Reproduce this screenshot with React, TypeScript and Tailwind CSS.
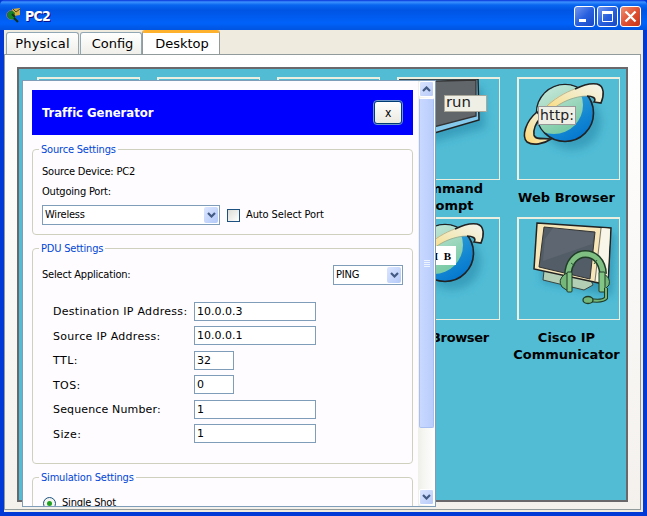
import type { ReactNode } from "react";

function Tile({ children, label, labelClass = "" }: { children?: ReactNode; label?: ReactNode; labelClass?: string }) {
  return (
    <div className="h-[140px] w-[103px]">
      <div className="h-[103px] w-[103px] border-t-2 border-r border-b border-l-2 border-[#ecefe0]">{children}</div>
      <div className={`-ml-2 flex h-[34px] w-[115px] items-center justify-center text-center text-[13px] leading-[17px] font-bold whitespace-nowrap text-black ${labelClass}`}>
        {label}
      </div>
    </div>
  );
}

function Globe({ tag, serif }: { tag: string; serif?: boolean }) {
  return (
    <svg width="100" height="100" viewBox="0 0 100 100">
      <defs>
        <linearGradient id="sea" x1="0" y1="0" x2="0.6" y2="1">
          <stop offset="0" stopColor="#48b9dc" />
          <stop offset="1" stopColor="#0579cf" />
        </linearGradient>
        <linearGradient id="land" x1="0" y1="0" x2="0.5" y2="1">
          <stop offset="0" stopColor="#e6f3ee" />
          <stop offset="1" stopColor="#7ccba7" />
        </linearGradient>
        <linearGradient id="ring" x1="0" y1="1" x2="1" y2="0">
          <stop offset="0" stopColor="#ffd66b" />
          <stop offset="0.5" stopColor="#f3e8b8" />
          <stop offset="1" stopColor="#f5f5ee" />
        </linearGradient>
        <filter id="soft" x="-30%" y="-30%" width="160%" height="160%">
          <feGaussianBlur stdDeviation="4" />
        </filter>
        <clipPath id="ball">
          <circle cx="46" cy="34" r="28" />
        </clipPath>
      </defs>
      <ellipse cx="53" cy="43" rx="29" ry="28" fill="#258aab" opacity="0.6" filter="url(#soft)" />
      <circle cx="46" cy="34" r="28.500" fill="url(#sea)" stroke="#222" strokeWidth="1.6" />
      <circle cx="35" cy="26" r="29" fill="url(#land)" clipPath="url(#ball)" />
      <path d="M18 33C7 42 2 57 8 63C14 67 25 65 32 60C24 59 16 61 15 56C14 50 17 44 22 38Z" fill="url(#ring)" stroke="#222" strokeWidth="1.6" />
      <path d="M24 31C34 18 50 12 58 9C64 6 72 4 78 5C86 7 85 17 82 24L75 23C78 19 73 17 68 17C52 17 38 25 29 36Z" fill="url(#ring)" />
      <path d="M24 31C34 20 47 13 56 10" fill="none" stroke="#aaa27e" strokeWidth="0.7" />
      <path d="M56 10C64 6 72 4 78 5C86 7 85 17 82 24L75 23C78 19 73 17 68 17" fill="none" stroke="#222" strokeWidth="1.6" />
      <path d="M68 17C56 17 42 23 34 30" fill="none" stroke="#8b9c84" strokeWidth="0.7" />
      <rect x="19.500" y="27.500" width="37" height="18" fill={serif ? "#fff" : "#efefe6"} stroke={serif ? "#fff" : "#999"} />
      {serif ? (
        <text x="19" y="41" fontFamily="Liberation Serif, serif" fontSize="11" fontWeight="700" textLength="33">{tag}</text>
      ) : (
        <text x="21" y="41" fontFamily="DejaVu Sans, sans-serif" fontSize="14" textLength="34" fill="#222">{tag}</text>
      )}
    </svg>
  );
}

function RunIcon() {
  return (
    <svg width="100" height="100" viewBox="0 0 100 100">
      <path d="M20 10L83 8L87 49L30 64Z" fill="#258aab" opacity="0.6" filter="url(#soft)" />
      <path d="M-1 0L79 0L80 41L8 62Z" fill="#85c9ec" stroke="#222" strokeWidth="1.5" />
      <path d="M3 3L77 1L77 37L8 55Z" fill="#61666b" stroke="#333" strokeWidth="1.3" />
      <rect x="45.500" y="16.500" width="42" height="16" fill="#efefe6" stroke="#aaa89b" />
      <text x="47" y="28" fontFamily="DejaVu Sans, sans-serif" fontSize="13.500" textLength="25" lengthAdjust="spacingAndGlyphs" fill="#222">run</text>
    </svg>
  );
}

function CommunicatorIcon() {
  return (
    <svg width="100" height="100" viewBox="0 0 100 100">
      <path d="M25 10L96 15L93 77L23 63Z" fill="#2888a9" opacity="0.65" filter="url(#soft)" />
      <path d="M25 52L24 61L65 71L74 66L71 59Z" fill="#b2ceb5" stroke="#394540" />
      <path d="M18 4L92 9L89 66L15 50Z" fill="#f6e6b8" stroke="#222" strokeWidth="1.5" />
      <path d="M83 9L91 10L88 64L77 62Z" fill="#f8f6e9" />
      <path d="M82 9L76 62" stroke="#777" />
      <path d="M25 8L76 13L71 60L20 48Z" fill="#535d68" stroke="#333" />
      <path d="M34 9L75 14L73 25L24 42L26 20Z" fill="#6a727a" opacity="0.5" />
      <path d="M49 57C49 28 83 28 84 55" fill="none" stroke="#203d28" strokeWidth="8" />
      <path d="M49 57C49 28 83 28 84 55" fill="none" stroke="#80bf82" strokeWidth="5" />
      <path d="M52 44L56 47M78 41L75 45" fill="none" stroke="#275935" strokeWidth="1" />
      <path d="M46 55Q38 61 43 68L49 72V54Z" fill="#75b779" stroke="#203d28" />
      <rect x="48" y="53" width="5" height="20" rx="1" fill="#83c585" stroke="#203d28" />
      <path d="M85 55Q92 59 90 66L85 71Z" fill="#75b779" stroke="#203d28" />
      <rect x="80" y="53" width="6" height="20" rx="1" fill="#83c585" stroke="#203d28" />
      <path d="M87 69V79Q84 83 70 81" fill="none" stroke="#203d28" strokeWidth="4" />
      <path d="M87 69V79Q84 83 70 81" fill="none" stroke="#75b779" strokeWidth="2" />
      <ellipse cx="69" cy="81" rx="5" ry="3.500" fill="#75b779" stroke="#203d28" strokeWidth="1.3" />
    </svg>
  );
}

function Chevron({ up }: { up?: boolean }) {
  return (
    <svg width="9" height="6" viewBox="0 0 9 6" className={up ? "rotate-180" : ""}>
      <path d="M1 1L4.500 4.500L8 1" fill="none" stroke="#435a83" strokeWidth="2.2" />
    </svg>
  );
}

function Select({ value, className }: { value: string; className: string }) {
  return (
    <div className={`flex h-5 items-center justify-between border border-[#7f9db9] bg-white pr-px pl-[2px] ${className}`}>
      <span>{value}</span>
      <span className="flex h-4 w-[14px] items-center justify-center rounded-[2px] bg-gradient-to-br from-[#dce6ff] to-[#b3c9f8]">
        <Chevron />
      </span>
    </div>
  );
}

function Group({ title, className, children }: { title: string; className: string; children: ReactNode }) {
  return (
    <fieldset className={`w-[381px] shrink-0 rounded-[4px] border border-[#d0d0bf] px-[9px] ${className}`}>
      <legend className="-ml-[3px] h-[13px] px-[2px] leading-[13px] text-[#0046d5]">{title}</legend>
      {children}
    </fieldset>
  );
}

const fields = [
  { label: "Destination IP Address:", value: "10.0.0.3", size: "w-[122px]", track: "tracking-[0.3px]" },
  { label: "Source IP Address:", value: "10.0.0.1", size: "w-[122px]", track: "tracking-[0.3px]" },
  { label: "TTL:", value: "32", size: "w-[40px]", track: "tracking-[0.5px]" },
  { label: "TOS:", value: "0", size: "w-[40px]", track: "tracking-[0.4px]" },
  { label: "Sequence Number:", value: "1", size: "w-[122px]", track: "tracking-[0.15px]" },
  { label: "Size:", value: "1", size: "w-[122px]", track: "tracking-[0.4px]" },
];

function TrafficGenerator() {
  return (
    <div className="absolute top-[80px] left-[22px] flex h-[427px] w-[414px] overflow-hidden border border-[#7f9db9] bg-[#fefcff] font-['DejaVu_Sans_Condensed','DejaVu_Sans',sans-serif] text-[11px] tracking-[-0.2px] text-black [font-stretch:condensed]">
      <div className="flex w-[395px] shrink-0 flex-col pt-[9px] pl-[9px]">
        <div className="flex h-[45px] w-[381px] shrink-0 items-center justify-between bg-[#0000ff] pr-[11px] pl-[10px]">
          <span className="text-[13px] font-bold tracking-[-0.05px] text-white">Traffic Generator</span>
          <button className="h-[23px] w-[28px] rounded-[3px] border border-[#003c74] bg-gradient-to-b from-white to-[#ebe9df] text-[12px] leading-[18px] outline outline-[#6c96c9]">x</button>
        </div>
        <Group title="Source Settings" className="mt-2 h-[92px]">
          <div className="flex h-[26px] items-center pt-[7px]">Source Device: PC2</div>
          <div className="flex h-5 items-center pt-px">Outgoing Port:</div>
          <div className="mt-[3px] flex items-center">
            <Select value="Wireless" className="w-[178px]" />
            <span className="mr-[6px] ml-[7px] h-[13px] w-[13px] border border-[#1c5180] bg-gradient-to-br from-[#dcdcd7] to-white" />
            <span className="tracking-[-0.1px]">Auto Select Port</span>
          </div>
        </Group>
        <Group title="PDU Settings" className="mt-[7px] h-[222px]">
          <div className="flex items-center justify-between pt-[10px]">
            <span>Select Application:</span>
            <Select value="PING" className="w-[70px]" />
          </div>
          <div className="mt-[14px] pl-[11px] font-['DejaVu_Sans',sans-serif] tracking-normal [font-stretch:normal]">
            {fields.map((f) => (
              <div key={f.label} className="flex h-[24.5px] items-center">
                <span className={`w-[141px] pt-[2px] whitespace-nowrap ${f.track}`}>{f.label}</span>
                <span className={`flex h-[19px] items-center border border-[#7f9db9] bg-white pt-px pl-[2px] ${f.size}`}>{f.value}</span>
              </div>
            ))}
          </div>
        </Group>
        <Group title="Simulation Settings" className="mt-[7px] h-[60px]">
          <div className="flex items-center pt-[11px] pl-[1px]">
            <span className="mr-[6px] flex h-[13px] w-[13px] items-center justify-center rounded-full border border-[#1c5180] bg-[#f4f4f0]">
              <span className="h-[5px] w-[5px] rounded-full bg-[#21a121]" />
            </span>
            Single Shot
          </div>
        </Group>
      </div>
      <div className="flex w-[17px] shrink-0 flex-col items-center bg-gradient-to-r from-[#f0f0ea] to-white pb-px">
        <div className="flex h-[16px] w-[15px] shrink-0 items-center justify-center rounded-[2px] border border-white bg-gradient-to-br from-[#dae4ff] to-[#b8cbf8]">
          <Chevron up />
        </div>
        <div className="mt-px flex h-[330px] w-[15px] shrink-0 flex-col items-center justify-center gap-px rounded-[2px] border border-[#a9bfef] border-t-white bg-gradient-to-r from-[#c8d8ff] to-[#b9cdfc]">
          <span className="h-px w-[6px] bg-[#eef4fe]" />
          <span className="h-px w-[6px] bg-[#eef4fe]" />
          <span className="h-px w-[6px] bg-[#eef4fe]" />
          <span className="h-px w-[6px] bg-[#eef4fe]" />
        </div>
        <div className="mt-auto flex h-[16px] w-[15px] shrink-0 items-center justify-center rounded-[2px] border border-white bg-gradient-to-br from-[#dae4ff] to-[#b8cbf8]">
          <Chevron />
        </div>
      </div>
    </div>
  );
}

export default function App() {
  return (
    <div className="relative flex h-[516px] w-[647px] flex-col overflow-hidden bg-[#0039d6] font-['DejaVu_Sans',sans-serif]">
      <header className="flex h-[30px] shrink-0 items-center rounded-t-[5px] bg-[linear-gradient(#0831d9_0px,#3b91ff_2px,#0866ef_5px,#0054e3_10px,#0062fa_23px,#0054e0_30px)] pr-[6px] pl-[6px]">
        <svg width="16" height="16" viewBox="0 0 16 16">
          <circle cx="5" cy="8" r="4.500" fill="#28547d" stroke="#617b8e" />
          <path d="M6 2L14 1V8L8 9Z" fill="#d5ab43" />
          <path d="M7 2L10 5L14 2" fill="none" stroke="#4b482a" />
          <path d="M2 6Q6 2 9 6L8 12Q3 13 2 9Z" fill="#168325" />
          <path d="M6 7L9 10M8 11L12 15" stroke="#12301d" strokeWidth="2" />
        </svg>
        <span className="ml-[3px] pt-[3px] font-['DejaVu_Sans_Condensed','DejaVu_Sans',sans-serif] text-[14px] font-bold tracking-[-0.7px] text-white [font-stretch:condensed] [text-shadow:1px_1px_#0f1089]">PC2</span>
        <div className="ml-auto flex gap-[2px] pt-[2px]">
          <button className="flex h-[21px] w-[21px] items-center justify-center rounded-[3px] border border-white bg-gradient-to-br from-[#7396ed] via-[#2860df] to-[#1848c4]">
            <svg width="19" height="19"><path d="M4 13.500H11" stroke="white" strokeWidth="3" /></svg>
          </button>
          <button className="flex h-[21px] w-[21px] items-center justify-center rounded-[3px] border border-white bg-gradient-to-br from-[#7396ed] via-[#2860df] to-[#1848c4]">
            <svg width="19" height="19"><path d="M4.500 5V14.500H14.500V5M4 5.500H15" fill="none" stroke="white" /><path d="M4 5.500H15" stroke="white" strokeWidth="3" /></svg>
          </button>
          <button className="flex h-[21px] w-[21px] items-center justify-center rounded-[3px] border border-white bg-gradient-to-br from-[#ef8e71] via-[#df5134] to-[#c83315]">
            <svg width="19" height="19"><path d="M4.500 4.500L14.500 14.500M14.500 4.500L4.500 14.500" stroke="white" strokeWidth="2.300" /></svg>
          </button>
        </div>
      </header>
      <main className="mr-[4px] ml-[4px] flex h-[482px] flex-col bg-[#efebde] pr-[1px] pb-[2px]">
        <nav className="flex h-[24px] shrink-0 items-end pl-[2px] text-[13px] text-black">
          <div className="h-[22px] w-[73px] rounded-t-[3px] border border-b-0 border-[#91a7b4] bg-gradient-to-b from-white to-[#f0efe9] text-center leading-[21px] tracking-[0.2px]">Physical</div>
          <div className="ml-px h-[22px] w-[62px] rounded-t-[3px] border border-b-0 border-[#91a7b4] bg-gradient-to-b from-white to-[#f0efe9] pl-[3px] text-center leading-[21px]">Config</div>
          <div className="-mb-px h-[25px] w-[78px] rounded-t-[3px] border border-t-[3px] border-b-0 border-[#919b9c] border-t-[#fdb12c] bg-white pl-[2px] text-center leading-[21px]">Desktop</div>
        </nav>
        <section className="mr-px grow border border-[#919b9c] bg-gradient-to-b from-white to-[#f4f1ed] pt-[12px] pl-[12px]">
          <div className="grid h-[435px] w-[611px] grid-cols-[repeat(5,103px)] content-start gap-x-[17px] border-2 border-[#6b686b] bg-[#52bcd5] pt-[8px] pl-[18px]">
            <Tile />
            <Tile />
            <Tile />
            <Tile label={<>Command<br />Prompt</>}><RunIcon /></Tile>
            <Tile label="Web Browser"><Globe tag="http:" /></Tile>
            <Tile />
            <Tile />
            <Tile />
            <Tile label="MIB Browser" labelClass="tracking-[-0.35px] pr-[4px]"><Globe tag="M I B" serif /></Tile>
            <Tile label={<>Cisco IP<br />Communicator</>} labelClass="mt-[9px]"><CommunicatorIcon /></Tile>
          </div>
        </section>
      </main>
      <TrafficGenerator />
    </div>
  );
}
